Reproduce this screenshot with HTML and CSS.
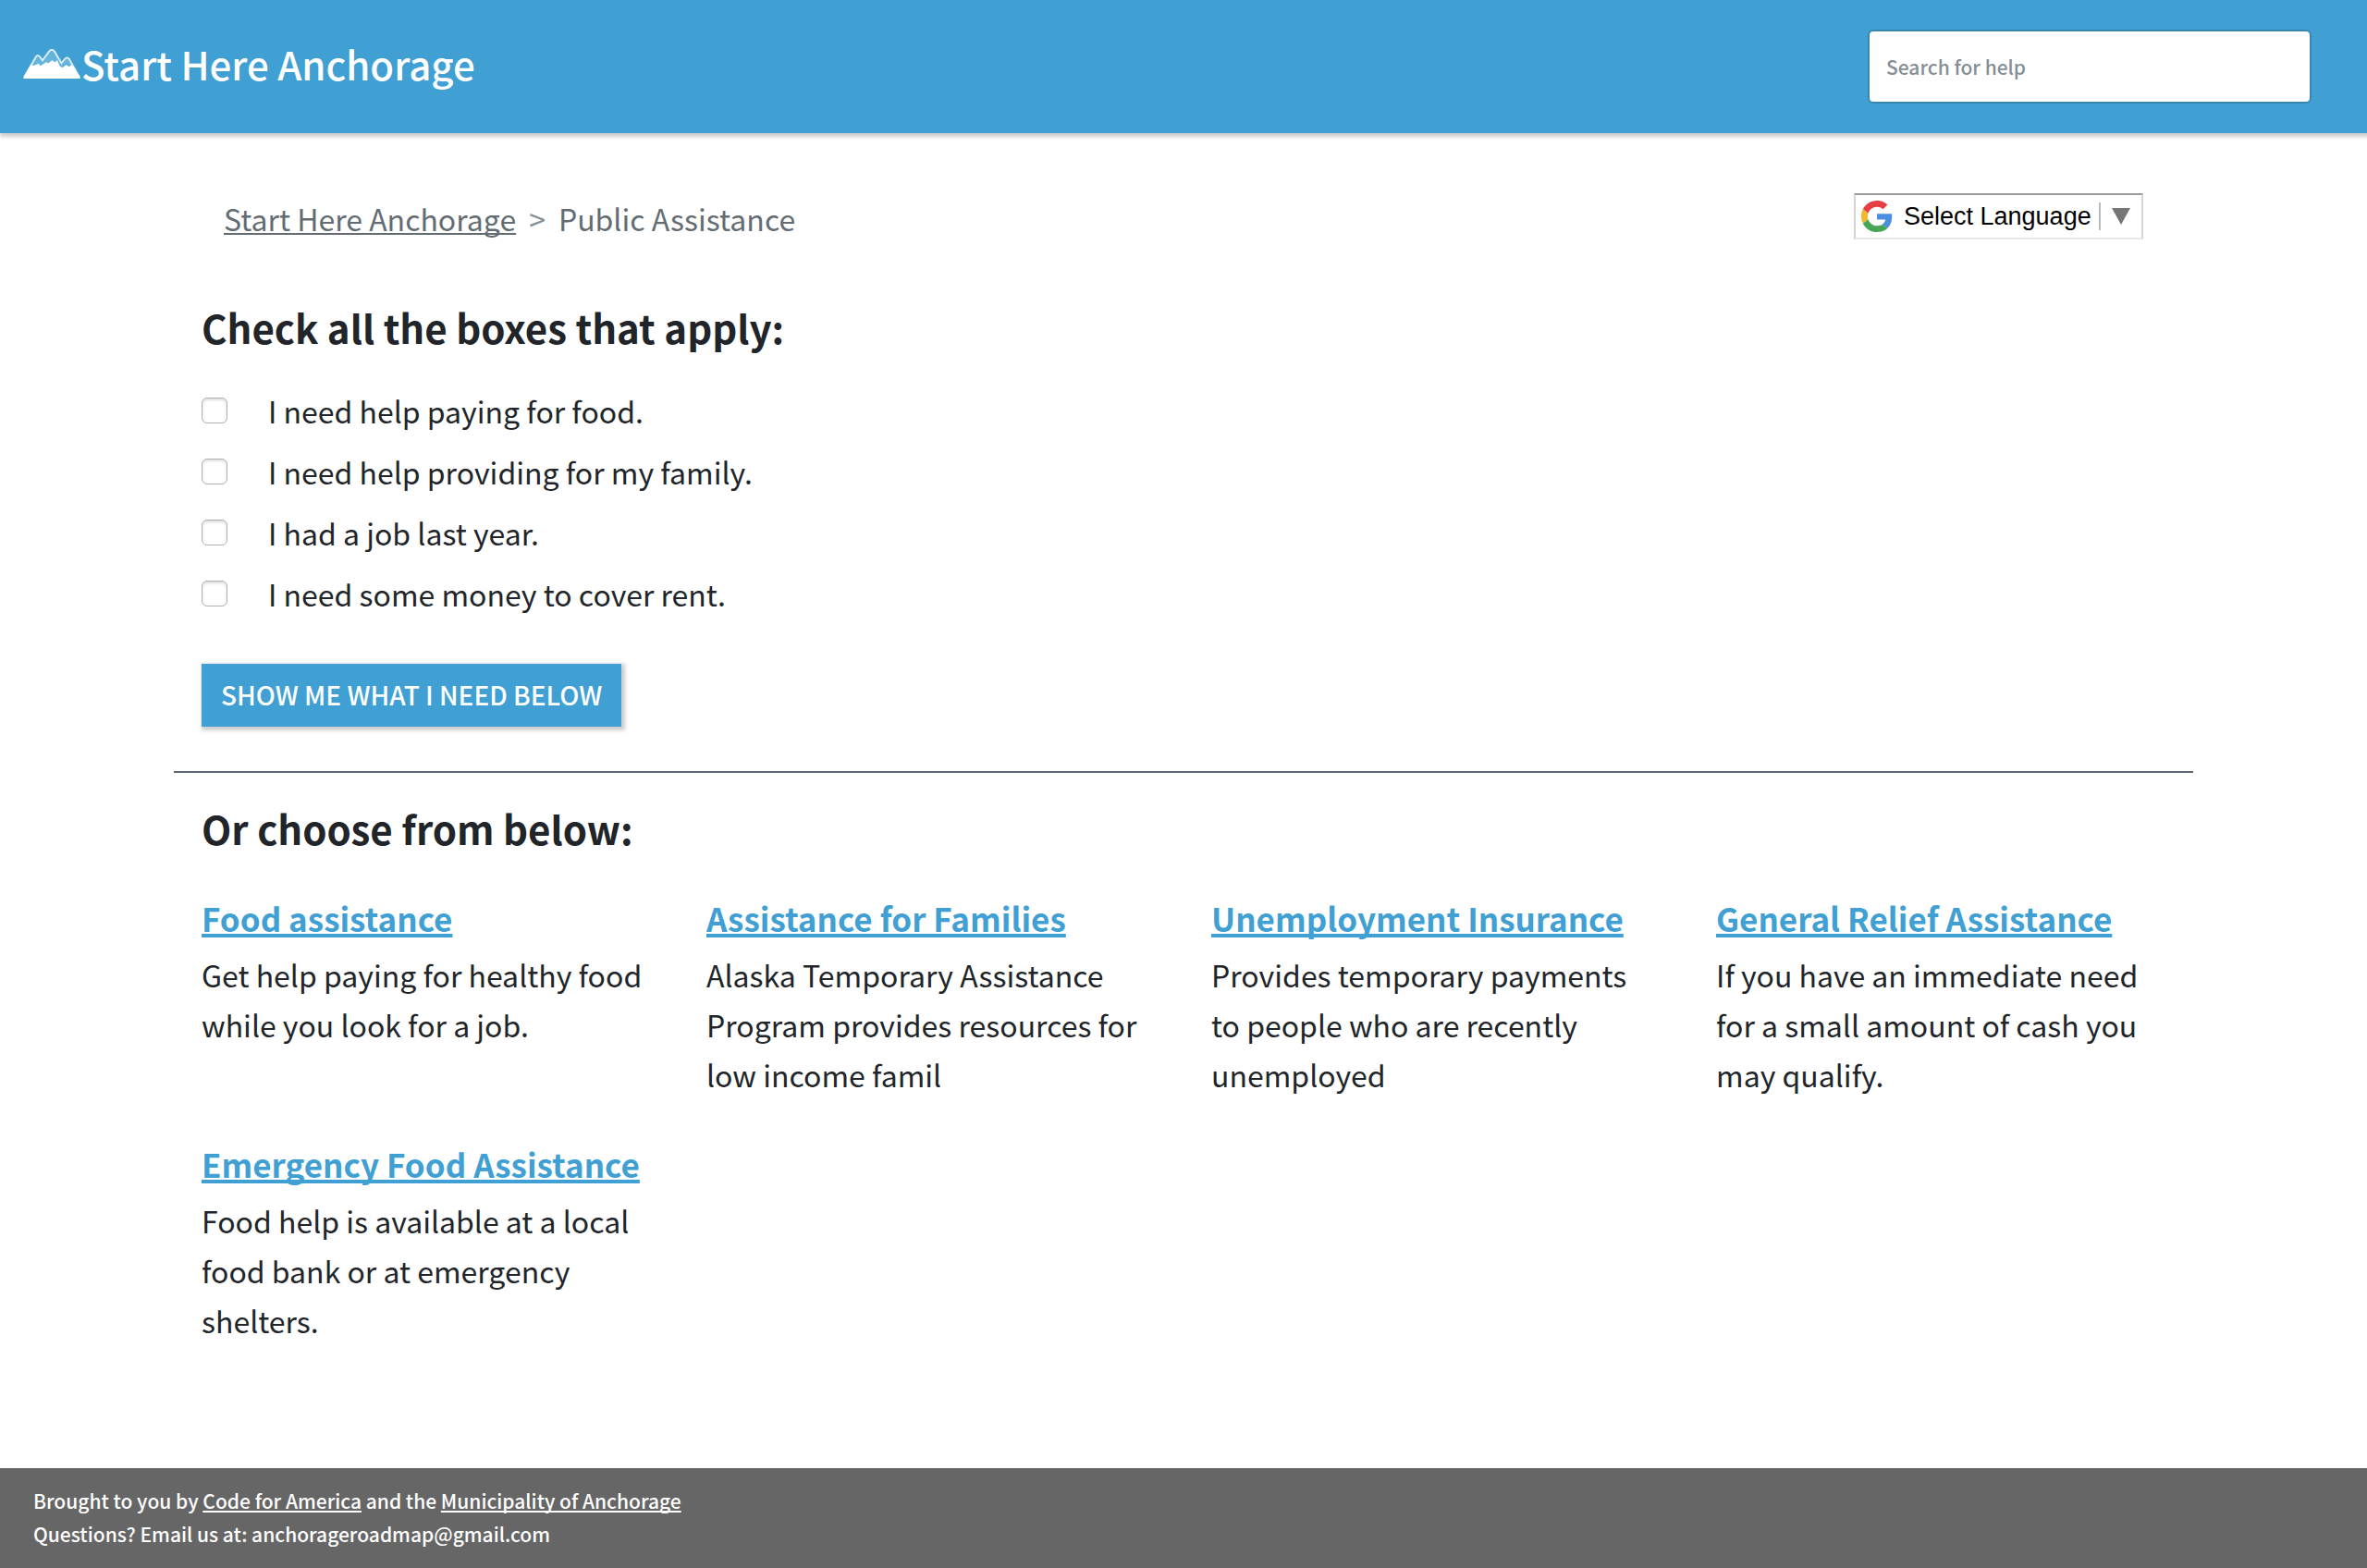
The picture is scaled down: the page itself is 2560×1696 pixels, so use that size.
FILE: index.html
```html
<!DOCTYPE html>
<html lang="en">
<head>
<meta charset="utf-8">
<meta name="viewport" content="width=device-width, initial-scale=1">
<title>Public Assistance - Start Here Anchorage</title>
<link rel="stylesheet" href="styles.css">
</head>
<body>
<header class="site-header">
  <a class="brand" href="#">
    <svg class="brand-logo" viewBox="44 44 188 102" aria-hidden="true">
      <path d="M48 141 L86 73 Q93 62 101 74 L108 84 L129 55 Q138 43 147 55 L169 93 L181 79 Q188 72 195 80 L229 141 Z" fill="#fff" fill-opacity=".2"/>
      <path d="M49 138 L86 73 Q93 62 101 74 L108 84 L129 55 Q138 43 147 55 L169 93 L181 79 Q188 72 195 80 L227 138" fill="none" stroke="#fff" stroke-opacity=".75" stroke-width="6"/>
      <path d="M46 143 Q45 138 50 131 L70 98 L80 101 L95 94 L101 102 L109 97 L119 90 L128 93 L139 84 L148 90 L156 84 L163 101 L172 108 L185 99 L194 105 L201 99 L208 103 L229 136 Q232 141 229 143 Z" fill="#fff"/>
    </svg>
    <span>Start Here Anchorage</span>
  </a>
  <form class="search" role="search">
    <input class="search-input" type="search" placeholder="Search for help" aria-label="Search for help">
  </form>
</header>

<main class="page">
  <div class="toolbar">
    <nav class="breadcrumb" aria-label="Breadcrumb">
      <a href="#">Start Here Anchorage</a>
      <span class="breadcrumb-sep">&gt;</span>
      <span>Public Assistance</span>
    </nav>
    <div class="language">
      <svg class="language-logo" viewBox="0 0 48 48" aria-hidden="true">
        <path fill="#e63e43" d="M24 9.500c3.540 0 6.710 1.220 9.210 3.600l6.850-6.850C35.900 2.380 30.470 0 24 0 14.620 0 6.510 5.380 2.560 13.220l7.980 6.190C12.430 13.720 17.740 9.500 24 9.500z"/>
        <path fill="#4a8fe2" d="M46.980 24.550c0-1.570-.15-3.090-.38-4.550H24v9.020h12.940c-.58 2.960-2.260 5.480-4.780 7.180l7.730 6c4.510-4.180 7.090-10.360 7.090-17.650z"/>
        <path fill="#f3b92b" d="M10.530 28.590c-.48-1.450-.76-2.990-.76-4.590s.27-3.140.76-4.590l-7.980-6.190C.92 16.460 0 20.120 0 24c0 3.880.92 7.540 2.560 10.780l7.970-6.190z"/>
        <path fill="#48a556" d="M24 48c6.480 0 11.930-2.130 15.890-5.810l-7.730-6c-2.150 1.450-4.920 2.300-8.160 2.300-6.260 0-11.570-4.220-13.470-9.910l-7.980 6.190C6.510 42.620 14.620 48 24 48z"/>
      </svg>
      <select class="language-select" aria-label="Select Language">
        <option>Select Language</option>
      </select>
      <svg class="language-arrow" viewBox="0 0 20 18" aria-hidden="true"><path d="M0 0h20L10 18z" fill="#767676"/></svg>
    </div>
  </div>

  <form class="needs">
    <h2 class="section-title">Check all the boxes that apply:</h2>
    <div class="need-list">
      <label class="need"><input class="need-box" type="checkbox"><span>I need help paying for food.</span></label>
      <label class="need"><input class="need-box" type="checkbox"><span>I need help providing for my family.</span></label>
      <label class="need"><input class="need-box" type="checkbox"><span>I had a job last year.</span></label>
      <label class="need"><input class="need-box" type="checkbox"><span>I need some money to cover rent.</span></label>
    </div>
    <button class="submit" type="button">SHOW ME WHAT I NEED BELOW</button>
  </form>

  <hr class="divider">

  <h2 class="section-title">Or choose from below:</h2>
  <div class="services">
    <article class="service">
      <h3 class="service-title"><a href="#">Food assistance</a></h3>
      <p class="service-text">Get help paying for healthy food while you look for a job.</p>
    </article>
    <article class="service">
      <h3 class="service-title"><a href="#">Assistance for Families</a></h3>
      <p class="service-text">Alaska Temporary Assistance Program provides resources for low income famil</p>
    </article>
    <article class="service">
      <h3 class="service-title"><a href="#">Unemployment Insurance</a></h3>
      <p class="service-text">Provides temporary payments to people who are recently unemployed</p>
    </article>
    <article class="service">
      <h3 class="service-title"><a href="#">General Relief Assistance</a></h3>
      <p class="service-text">If you have an immediate need for a small amount of cash you may qualify.</p>
    </article>
    <article class="service">
      <h3 class="service-title"><a href="#">Emergency Food Assistance</a></h3>
      <p class="service-text">Food help is available at a local food bank or at emergency shelters.</p>
    </article>
  </div>
</main>

<footer class="site-footer">
  <p>Brought to you by <a href="#">Code for America</a> and the <a href="#">Municipality of Anchorage</a></p>
  <p>Questions? Email us at: anchorageroadmap@gmail.com</p>
</footer>
</body>
</html>
```
FILE: styles.css
```css
* {
  box-sizing: border-box;
}

body {
  margin: 0;
  min-height: 100vh;
  display: flex;
  flex-direction: column;
  background: #fff;
  color: #212529;
  font-family: "Source Sans Pro", "Noto Sans CJK SC", sans-serif;
  font-size: 32px;
  line-height: 54px;
}

h2, h3, p {
  margin: 0;
}

a {
  color: inherit;
  text-decoration: underline;
  text-decoration-skip-ink: none;
}

input, button, select {
  font: inherit;
}

/* Header */
.site-header {
  display: flex;
  align-items: center;
  justify-content: space-between;
  padding: 32px 60px 32px 24px;
  background: #40a0d3;
  box-shadow: 2px 2px 4px 2px rgba(0, 0, 0, 0.2);
}

.brand {
  display: flex;
  align-items: center;
  padding-bottom: 6px;
  color: #fff;
  font-size: 42px;
  font-weight: 500;
  line-height: 60px;
  text-decoration: none;
}

.brand-logo {
  width: 64px;
  height: 34px;
}

.search-input {
  display: block;
  width: 480px;
  height: 80px;
  padding: 0 18px;
  border: 2px solid #3787b3;
  border-radius: 6px;
  background: #fff;
  color: #212529;
  font-size: 21px;
  font-weight: 500;
  appearance: none;
}

.search-input::placeholder {
  color: #868e96;
  opacity: 1;
}

/* Page */
.page {
  width: 100%;
  max-width: 2184px;
  margin: 0 auto;
  padding: 65px 30px 0;
}

.toolbar {
  display: flex;
  align-items: flex-start;
  justify-content: space-between;
  padding: 0 24px;
  margin-bottom: 60px;
}

.breadcrumb {
  display: flex;
  gap: 14px;
  color: #636c72;
}

.breadcrumb a {
  text-decoration-thickness: 2px;
  text-underline-offset: 2px;
}

.breadcrumb-sep {
  color: #868e96;
}

.language {
  display: flex;
  align-items: center;
  height: 50px;
  padding: 0 12px 0 6px;
  border: 2px solid #d5d5d5;
  border-top-color: #9b9b9b;
  border-bottom-color: #e8e8e8;
}

.language-logo {
  width: 34px;
  height: 34px;
}

.language-select {
  margin: 0 12px;
  padding: 0 8px 0 0;
  height: 30px;
  border: 0;
  border-right: 2px solid #bbb;
  border-radius: 0;
  background: transparent;
  color: #000;
  font-family: "Liberation Sans", sans-serif;
  font-size: 27px;
  line-height: 30px;
  appearance: none;
}

.language-arrow {
  width: 20px;
  height: 18px;
}

.section-title {
  font-size: 42px;
  font-weight: 600;
  line-height: 62px;
}

.need-list {
  display: flex;
  flex-direction: column;
  align-items: flex-start;
  gap: 12px;
  margin: 32px 0 49px;
}

.need {
  display: flex;
  align-items: center;
  gap: 44px;
}

.need-box {
  width: 28px;
  height: 28px;
  margin: 0;
  border: 1px solid #b0b0b0;
  border-radius: 6px;
  background: #fff;
  box-shadow: inset 0 2px 3px #ddd;
  appearance: none;
}

.submit {
  display: block;
  height: 68px;
  padding: 0 21px 1px;
  border: 0;
  background: #40a0d3;
  box-shadow: 2px 2px 4px 2px rgba(0, 0, 0, 0.2);
  color: #fff;
  font-size: 28px;
  font-weight: 500;
  line-height: 67px;
}

.divider {
  height: 2px;
  margin: 48px -30px 29px;
  border: 0;
  background: #5f6973;
}

.services {
  display: grid;
  grid-template-columns: repeat(4, 1fr);
  gap: 46px 60px;
  margin: 42px 0 60px;
}

.service-title {
  margin-bottom: 10px;
  color: #40a0d3;
  font-size: 35px;
  font-weight: 600;
  line-height: 48px;
}

.service-title a {
  text-decoration-thickness: 4px;
  text-underline-offset: 2px;
}

/* Footer */
.site-footer {
  margin-top: auto;
  padding: 17px 36px 19px;
  background: #666;
  color: #fff;
  font-size: 21px;
  font-weight: 500;
  line-height: 36px;
}

.site-footer a {
  text-decoration-thickness: 2px;
  text-underline-offset: 2px;
}
```
